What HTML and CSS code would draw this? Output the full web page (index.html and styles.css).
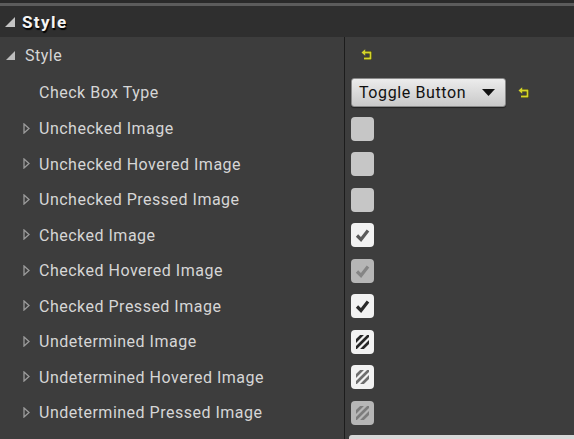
FILE: index.html
```html
<!DOCTYPE html>
<html lang="en">
<head>
    <meta charset="UTF-8">
    <title>Details - Style</title>
    <link rel="stylesheet" href="styles.css">
</head>
<body>
    <div class="panel">
        <div class="top-line"></div>

        <!-- category header -->
        <div class="category">
            <svg class="tri-open" width="10" height="10" viewBox="0 0 10 10"><polygon points="10,0 10,10 0,10" fill="#c4c4c4"/></svg>
            <span class="category-title">Style</span>
        </div>

        <div class="rows">
            <div class="row tall">
                <div class="name group">
                    <svg class="tri-open" width="9" height="9" viewBox="0 0 10 10"><polygon points="10,0 10,10 0,10" fill="#bdbdbd"/></svg>
                    <span>Style</span>
                </div>
                <div class="value">
                    <svg class="reset first" width="12" height="12" viewBox="0 0 12 12"><path d="M3 3.5H9.5V9.5H3" fill="none" stroke="#2a2a10" stroke-width="3"/><path d="M3 3.5H9.5V9.5H3" fill="none" stroke="#d4d42c" stroke-width="1.8"/><path d="M0.5 3.5L4.2 0.3V6.7Z" fill="#d4d42c"/></svg>
                </div>
            </div>

            <div class="row tall">
                <div class="name child">Check Box Type</div>
                <div class="value">
                    <div class="combo">
                        <span>Toggle Button</span>
                        <svg width="13" height="7" viewBox="0 0 13 7"><polygon points="0,0 13,0 6.5,7" fill="#111"/></svg>
                    </div>
                    <svg class="reset" width="12" height="12" viewBox="0 0 12 12"><path d="M3 3.5H9.5V9.5H3" fill="none" stroke="#2a2a10" stroke-width="3"/><path d="M3 3.5H9.5V9.5H3" fill="none" stroke="#d4d42c" stroke-width="1.8"/><path d="M0.5 3.5L4.2 0.3V6.7Z" fill="#d4d42c"/></svg>
                </div>
            </div>

            <div class="row">
                <div class="name child"><svg class="expand" width="7" height="11" viewBox="0 0 7 11"><polygon points="1,1 6,5.5 1,10" fill="none" stroke="#9c9c9c" stroke-width="1.3"/></svg>Unchecked Image</div>
                <div class="value"><div class="box empty"></div></div>
            </div>
            <div class="row">
                <div class="name child"><svg class="expand" width="7" height="11" viewBox="0 0 7 11"><polygon points="1,1 6,5.5 1,10" fill="none" stroke="#9c9c9c" stroke-width="1.3"/></svg>Unchecked Hovered Image</div>
                <div class="value"><div class="box empty"></div></div>
            </div>
            <div class="row">
                <div class="name child"><svg class="expand" width="7" height="11" viewBox="0 0 7 11"><polygon points="1,1 6,5.5 1,10" fill="none" stroke="#9c9c9c" stroke-width="1.3"/></svg>Unchecked Pressed Image</div>
                <div class="value"><div class="box empty"></div></div>
            </div>

            <div class="row">
                <div class="name child"><svg class="expand" width="7" height="11" viewBox="0 0 7 11"><polygon points="1,1 6,5.5 1,10" fill="none" stroke="#9c9c9c" stroke-width="1.3"/></svg>Checked Image</div>
                <div class="value"><div class="box white"><svg width="23" height="24" viewBox="0 0 23 24"><path d="M6 12.5L10 16.5L17 7.5" fill="none" stroke="#5a5a5a" stroke-width="3.2"/></svg></div></div>
            </div>
            <div class="row">
                <div class="name child"><svg class="expand" width="7" height="11" viewBox="0 0 7 11"><polygon points="1,1 6,5.5 1,10" fill="none" stroke="#9c9c9c" stroke-width="1.3"/></svg>Checked Hovered Image</div>
                <div class="value"><div class="box grey"><svg width="23" height="24" viewBox="0 0 23 24"><path d="M6 12.5L10 16.5L17 7.5" fill="none" stroke="#858585" stroke-width="3.2"/></svg></div></div>
            </div>
            <div class="row">
                <div class="name child"><svg class="expand" width="7" height="11" viewBox="0 0 7 11"><polygon points="1,1 6,5.5 1,10" fill="none" stroke="#9c9c9c" stroke-width="1.3"/></svg>Checked Pressed Image</div>
                <div class="value"><div class="box white"><svg width="23" height="24" viewBox="0 0 23 24"><path d="M6 12.5L10 16.5L17 7.5" fill="none" stroke="#2a2a2a" stroke-width="3.2"/></svg></div></div>
            </div>

            <div class="row">
                <div class="name child"><svg class="expand" width="7" height="11" viewBox="0 0 7 11"><polygon points="1,1 6,5.5 1,10" fill="none" stroke="#9c9c9c" stroke-width="1.3"/></svg>Undetermined Image</div>
                <div class="value"><div class="box white"><svg width="23" height="24" viewBox="0 0 23 24"><clipPath id="c1"><rect x="5" y="5" width="13" height="14"/></clipPath><path clip-path="url(#c1)" d="M0 16L16 0M0 23L23 0M6 24L30 0" fill="none" stroke="#262626" stroke-width="2.7"/></svg></div></div>
            </div>
            <div class="row">
                <div class="name child"><svg class="expand" width="7" height="11" viewBox="0 0 7 11"><polygon points="1,1 6,5.5 1,10" fill="none" stroke="#9c9c9c" stroke-width="1.3"/></svg>Undetermined Hovered Image</div>
                <div class="value"><div class="box white"><svg width="23" height="24" viewBox="0 0 23 24"><clipPath id="c2"><rect x="5" y="5" width="13" height="14"/></clipPath><path clip-path="url(#c2)" d="M0 16L16 0M0 23L23 0M6 24L30 0" fill="none" stroke="#6e6e6e" stroke-width="2.7"/></svg></div></div>
            </div>
            <div class="row">
                <div class="name child"><svg class="expand" width="7" height="11" viewBox="0 0 7 11"><polygon points="1,1 6,5.5 1,10" fill="none" stroke="#9c9c9c" stroke-width="1.3"/></svg>Undetermined Pressed Image</div>
                <div class="value"><div class="box grey"><svg width="23" height="24" viewBox="0 0 23 24"><clipPath id="c3"><rect x="5" y="5" width="13" height="14"/></clipPath><path clip-path="url(#c3)" d="M0 16L16 0M0 23L23 0M6 24L30 0" fill="none" stroke="#7c7c7c" stroke-width="2.7"/></svg></div></div>
            </div>

            <!-- next property, cut off by the window -->
            <div class="row">
                <div class="name child"></div>
                <div class="value"><div class="next-widget"></div></div>
            </div>
        </div>
    </div>
</body>
</html>
```

FILE: styles.css
```css
body {
    margin: 0;
    background-color: #3d3d3d;
    font-family: Roboto, "Liberation Sans", sans-serif;
    overflow: hidden;
    height: 439px;
}

.panel {
    width: 574px;
    height: 439px;
    overflow: hidden;
}

.top-line {
    height: 3px;
    background-color: #2a2a2a;
    border-bottom: 3px solid #5c5c5c;
}

.category {
    height: 31px;
    background-color: #2f2f2f;
    display: flex;
    align-items: center;
    padding-left: 5px;
}

.category-title {
    margin-left: 7px;
    color: #f4f4f4;
    font-size: 17px;
    font-weight: bold;
    letter-spacing: 1.4px;
    text-shadow: 1px 2px 1px #000;
}

.rows {
    display: flex;
    flex-direction: column;
}

.row {
    display: flex;
    height: 35.5px;
    flex-shrink: 0;
}

.row.tall {
    height: 37px;
}

.name {
    width: 344px;
    flex-shrink: 0;
    display: flex;
    align-items: center;
    color: #d6d6d6;
    font-size: 16px;
    letter-spacing: 0.5px;
}

.name.group {
    padding-left: 6px;
    width: 338px;
}

.name.group span {
    margin-left: 10px;
}

.name.child {
    padding-left: 39px;
    width: 305px;
    position: relative;
}

.expand {
    position: absolute;
    left: 23px;
    top: 50%;
    margin-top: -6px;
}

.value {
    flex: 1;
    min-width: 0;
    overflow: hidden;
    border-left: 1px solid #1c1c1c;
    display: flex;
    align-items: center;
    padding-left: 6px;
}

.reset {
    margin-left: 12px;
}

.reset.first {
    margin-left: 10px;
    margin-top: -1px;
}

.combo {
    width: 155px;
    height: 29px;
    flex-shrink: 0;
    box-sizing: border-box;
    border: 1px solid #8a8a8a;
    border-radius: 3px;
    background: linear-gradient(#ececec, #c9c9c9);
    display: flex;
    align-items: center;
    justify-content: space-between;
    padding: 0 10px 0 7px;
    color: #111;
    font-size: 16px;
    letter-spacing: 0.6px;
    box-shadow: 0 1px 1px #222;
}

.box {
    width: 23px;
    height: 24px;
    border-radius: 4px;
}

.box svg {
    display: block;
}

.box.empty {
    background-color: #c6c6c6;
}

.box.white {
    background-color: #f2f2f2;
}

.box.grey {
    background-color: #b6b6b6;
}

.next-widget {
    align-self: flex-start;
    flex-shrink: 0;
    margin-top: 4px;
    margin-left: -2px;
    width: 260px;
    height: 20px;
    border-radius: 3px;
    background-color: #d8d8d8;
}
```
